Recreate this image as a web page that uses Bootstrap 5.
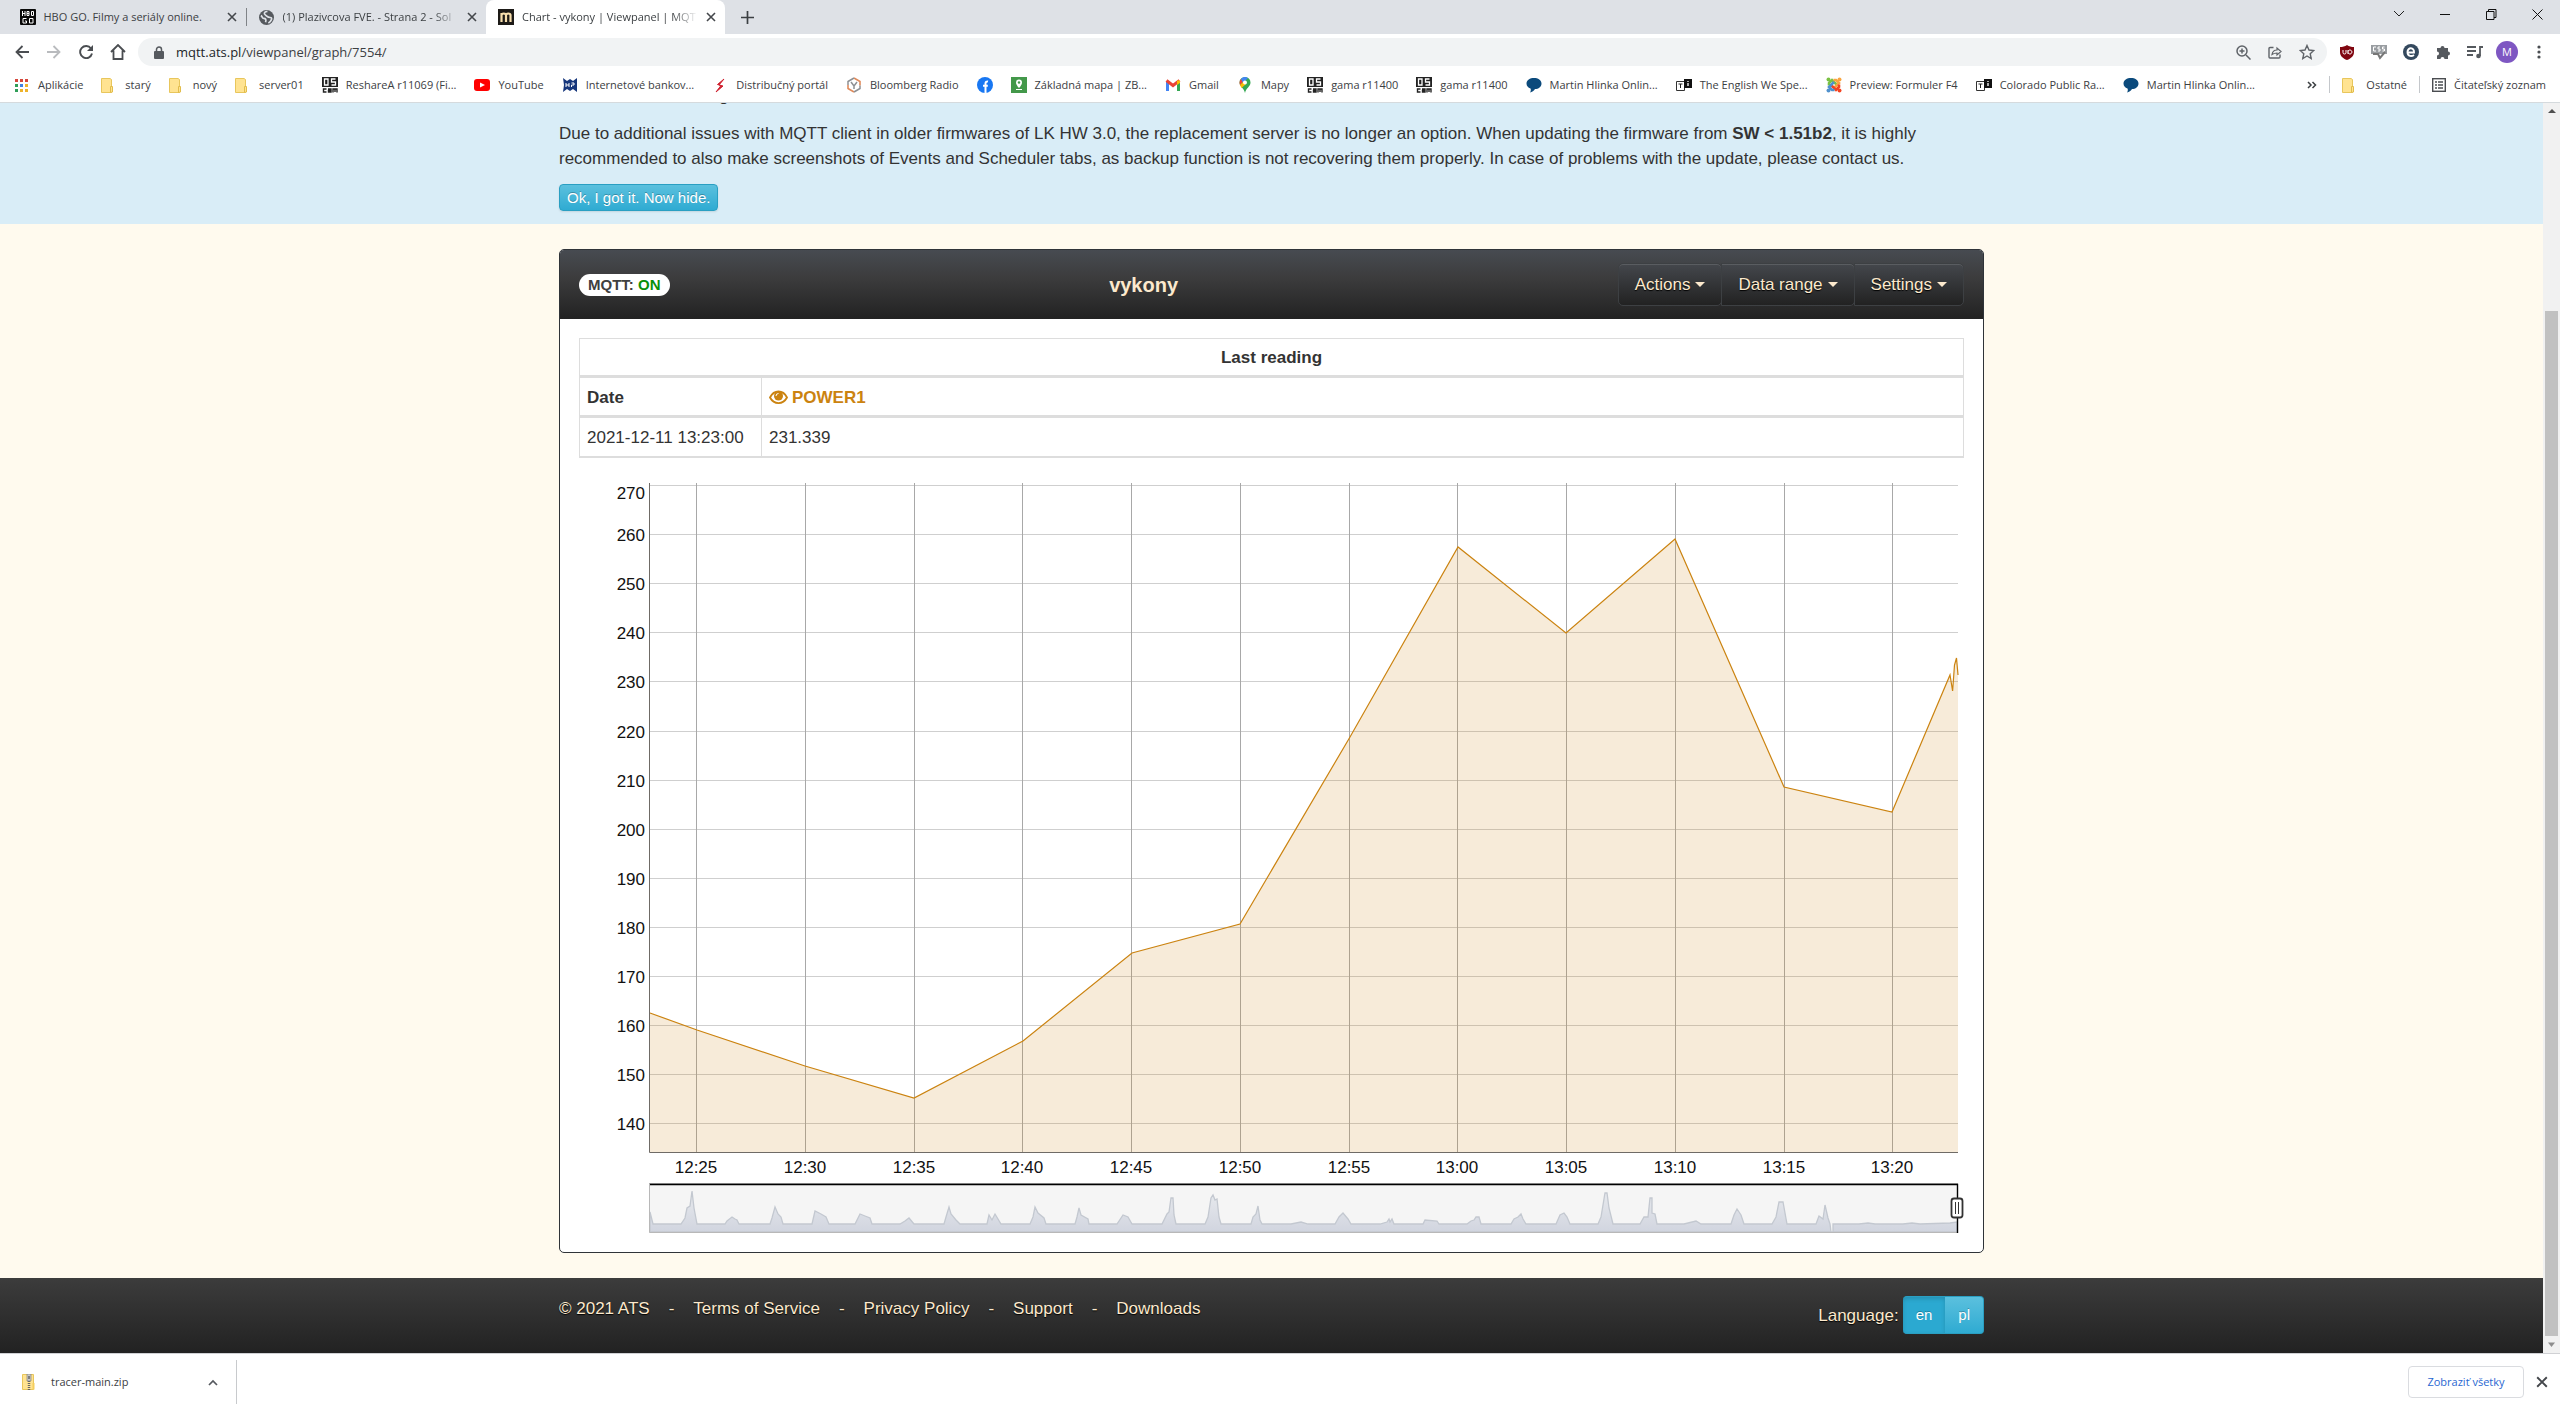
<!DOCTYPE html>
<html lang="sk">
<head>
<meta charset="utf-8">
<meta name="viewport" content="width=device-width, initial-scale=1">
<title>Chart - vykony | Viewpanel | MQTT</title>
<link href="https://cdn.jsdelivr.net/npm/bootstrap@5.3.0/dist/css/bootstrap.min.css" rel="stylesheet">
<style>
:root{--cream:#fce9cd}
body{font-family:"Liberation Sans",Arial,sans-serif;font-size:17px;line-height:25px;color:#333;background:#fff}
svg{display:block;flex:none}
.browser-ui{font-family:"Open Sans","Noto Sans",sans-serif;font-size:11px;line-height:16px;color:#3c4043}
.browser-ui button{border:0;background:none;padding:0;color:inherit;display:flex;align-items:center;justify-content:center}
.browser-ui a{color:inherit;text-decoration:none}
/* tabs */
.tabstrip{height:34px;background:#dee1e6}
.tab-item{width:239px;padding:0 9px 0 12px}
.tab-item.first{padding-left:20px;width:247px;border-right:1px solid #808387}
.tab-item.current{background:#fff;border-radius:8px 8px 0 0}
.tab-label{white-space:nowrap;overflow:hidden;width:176px}
.tab-label.faded{-webkit-mask-image:linear-gradient(90deg,#000 85%,transparent)}
.tab-rule{height:18px}
.win-btn{width:46px;height:28px}
/* toolbar */
.toolbar{height:36px;padding:0 5px 0 6px}
.tool-btn{width:32px;height:28px}
.omnibox{height:28px;border-radius:14px;background:#f1f3f4}
.address{font-size:13px}
.avatar{width:22px;height:22px;border-radius:50%;background:#7e57c2;color:#fff;font-size:11px}
/* bookmarks */
.bookmarks{height:33px;border-bottom:1px solid #d5dadd;padding:0 14px 3px 14px;gap:18px}
.bookmarks a{display:flex;align-items:center;gap:8px;white-space:nowrap}
.v-rule{width:1px;height:17px;background:#c4c7cb}
/* page */
.viewport{background:#fffaee}
.scroll-rail{width:17px;background:#f1f1f1}
.scroll-thumb{width:13px;background:#c1c1c1;margin-top:208px}
.wrap{max-width:1425px;width:90%;margin:0 auto}
.notice{background:#d9edf7;overflow:hidden;padding-bottom:13px}
.notice p{margin:0 0 13px}
.notice .cut-line{margin-top:-20px;padding-left:160px}
.btn-teal{--bs-btn-color:#fff;--bs-btn-hover-color:#fff;background:linear-gradient(#5bc0de,#2fabd2);border:1px solid #2a9fc2;font-size:15px;line-height:25px;text-shadow:0 -1px 0 rgba(0,0,0,.25);border-radius:4px;color:#fff}
.btn-hide{padding:0 7px;box-shadow:0 1px 2px rgba(0,0,0,.1)}
.panel{border:1px solid #2f3338;border-radius:5px;background:#fff;margin-top:25px;margin-bottom:25px;overflow:hidden}
.panel-top{height:69px;padding:0 19px;background:linear-gradient(#474b51,#3c3c3d 40%,#222)}
.state-pill{background:#fff;border-radius:11px;font-size:15px;line-height:22px;font-weight:700;padding:0 9px;color:#404040}
.state-pill span{color:#0a8f0a}
.panel-title{font-size:20px;font-weight:700;color:var(--cream);margin:0}
.btn-dark-grad{background:linear-gradient(#44474c,#222);border:1px solid #3d4043;color:var(--cream);font-size:17px;line-height:25px;padding:8px 16px;text-shadow:0 1px 1px #000;border-radius:5px;box-shadow:inset 0 1px 0 rgba(255,255,255,.12)}
.btn-dark-grad:hover,.btn-dark-grad:active{color:#fff}
.btn-dark-grad.dropdown-toggle::after{margin-left:5px;vertical-align:3px;border-top:5px solid;border-left:5px solid transparent;border-right:5px solid transparent}
.panel-body{padding:19px}
.readings{border:1px solid #ddd;border-bottom-width:2px;margin:0 0 16px;width:100%}
.readings th,.readings td{border:0;padding:6px 7px 5px;height:38px;color:#333}
.readings tr + tr > *{border-top:3px solid #ddd;height:40px}
.readings td + td,.readings th + th{border-left:1px solid #ddd}
.readings .date-col{width:182px}
.sensor{color:#cb8310;text-decoration:none}
.axis-text text{font-size:17px;fill:#111}
/* footer */
.page-foot{background:linear-gradient(#3c3c3c,#222);color:var(--cream);height:75px;text-shadow:0 1px 1px #000}
.page-foot a{color:inherit;text-decoration:none}
.foot-links{gap:19px;padding-top:18px}
.foot-lang{padding-top:18px}
.btn-lang{padding:6px 13px;line-height:24px;border-left:0}
.btn-lang.on{background:#2ba9d1;box-shadow:inset 0 2px 4px rgba(0,0,0,.15)}
/* downloads */
.shelf{height:57px;border-top:1px solid #d0d1d4}
.shelf-item{width:237px;height:44px;border-right:1px solid #c8cacd;padding:0 18px 0 22px}
.browser-ui .btn-all{border:1px solid #dadce0;border-radius:4px;height:32px;width:116px;color:#2a67d1}
</style>
<script src="https://cdn.jsdelivr.net/npm/bootstrap@5.3.0/dist/js/bootstrap.bundle.min.js"></script>
</head>
<body class="vh-100 d-flex flex-column overflow-hidden">

<svg width="0" height="0" class="position-absolute" aria-hidden="true">
  <symbol id="i-x" viewBox="0 0 10 10"><path d="M1 1l8 8M9 1L1 9" stroke="#44474b" stroke-width="1.6" fill="none"/></symbol>
  <symbol id="i-folder" viewBox="0 0 12 16"><path d="M.5 1.5h8.500l1.500 1V15.500H.500z" fill="#ffe391" stroke="#e8c65c"/><path d="M9.500 9.500h2v5.500l-2 .5z" fill="#ffe391" stroke="#e2bd4c"/></symbol>
  <symbol id="i-oscam" viewBox="0 0 16 16"><path d="M0 0h16v10H0z" fill="#222"/><path d="M2.500 2h3.500v6H2.500zM9.500 8h4V5h-4V2h4" fill="none" stroke="#fff" stroke-width="1.300"/><path d="M4.500 12H1.500v3h3M6 12h3v3H6.500v-1.500H9M11 15.500V12h4v3.500M13 12v3" fill="none" stroke="#222" stroke-width="1.400"/></symbol>
  <symbol id="i-bubble" viewBox="0 0 16 16"><path d="M8 1c4 0 7.500 2 7.500 5.500S12.500 12 9 12c-1 2-3 3-5 3.500C5 14 5 12.500 4.500 11.500 2 10.500.5 9 .5 6.500.5 3 4 1 8 1z" fill="#0b4a7c"/></symbol>
  <symbol id="i-ti" viewBox="0 0 16 16"><path d="M.5 4.500h8v9h-8z" fill="#fff" stroke="#333"/><path d="M8 2h8v9H8z" fill="#111"/><path d="M2.500 7h4M4.500 7v4" stroke="#222"/><path d="M12 4v1M12 6v3" stroke="#fff" stroke-width="1.300"/></symbol>
</svg>

<header class="browser-ui flex-shrink-0">
  <div class="tabstrip d-flex">
    <div class="d-flex align-items-center">
      <div class="tab-item first tab-rule d-flex align-items-center justify-content-between">
        <svg width="16" height="16" viewBox="0 0 16 16"><rect width="16" height="16" rx="1" fill="#0a0a0a"/><path d="M2.500 2v5M5 2v5M2.500 4.500H5M7 2.500h2v4H7zM7 4.500h2M11.500 2.500h2v4h-2zM6.500 9.500H3v4.500h3.500v-2H5M9.500 9.500h3.500V14H9.500z" stroke="#fff" fill="none"/></svg>
        <div class="tab-label">HBO GO. Filmy a seriály online.</div>
        <button aria-label="Zavrieť"><svg width="10" height="10"><use href="#i-x"/></svg></button>
      </div>
    </div>
    <div class="tab-item d-flex align-items-center justify-content-between">
      <svg width="15" height="15" viewBox="0 0 16 16"><circle cx="8" cy="8" r="8" fill="#55595e"/><path d="M9 1.500C5 2 5 4 7 5.500S9 8 12 8s1 4-2 6M2 6c2 1 1 3 3 3s3 1 2 4" stroke="#dee1e6" stroke-width="1.800" fill="none"/></svg>
      <div class="tab-label faded">(1) Plazivcova FVE. - Strana 2 - Sol</div>
      <button aria-label="Zavrieť"><svg width="10" height="10"><use href="#i-x"/></svg></button>
    </div>
    <div class="tab-item current d-flex align-items-center justify-content-between">
      <svg width="16" height="16" viewBox="0 0 16 16"><rect width="16" height="16" fill="#1d1a17"/><path d="M3.500 13V4M3.500 6c0-2 4.500-2 4.500 0v7M8 6c0-2 4.500-2 4.500 0v7" stroke="#f8dfae" stroke-width="2.200" fill="none"/></svg>
      <div class="tab-label faded">Chart - vykony | Viewpanel | MQT</div>
      <button aria-label="Zavrieť"><svg width="10" height="10"><use href="#i-x"/></svg></button>
    </div>
    <button class="ms-3" aria-label="Nová karta"><svg width="13" height="13" viewBox="0 0 13 13"><path d="M6.500 0v13M0 6.500h13" stroke="#3c4043" stroke-width="1.700"/></svg></button>
    <div class="ms-auto d-flex">
      <button class="win-btn" aria-label="Karty"><svg width="12" height="8" viewBox="0 0 12 8"><path d="M1 1l5 5 5-5" stroke="#222" fill="none"/></svg></button>
      <button class="win-btn" aria-label="Minimalizovať"><svg width="10" height="10"><path d="M0 5.500h10" stroke="#111"/></svg></button>
      <button class="win-btn" aria-label="Obnoviť"><svg width="11" height="11"><path d="M.5 2.500h7.500v8H.5zM2.500 2.500V.500H10V8.500H8" stroke="#111" fill="none"/></svg></button>
      <button class="win-btn" aria-label="Zavrieť okno"><svg width="11" height="11"><path d="M.5.500l10 10M10.500.500l-10 10" stroke="#111" fill="none"/></svg></button>
    </div>
  </div>

  <div class="toolbar d-flex align-items-center">
    <button class="tool-btn" aria-label="Späť"><svg width="14" height="14" viewBox="0 0 14 14"><path d="M14 7H1.500M7.500 1l-6 6 6 6" stroke="#4a4d51" stroke-width="1.800" fill="none"/></svg></button>
    <button class="tool-btn" aria-label="Dopredu"><svg width="14" height="14" viewBox="0 0 14 14"><path d="M0 7h12.500M6.500 1l6 6-6 6" stroke="#b9bbbe" stroke-width="1.800" fill="none"/></svg></button>
    <button class="tool-btn" aria-label="Obnoviť"><svg width="14" height="14" viewBox="0 0 14 14"><path d="M12 3.500A6 6 0 1 0 13 8.500" stroke="#4a4d51" stroke-width="1.900" fill="none"/><path d="M14 0v6H8z" fill="#4a4d51"/></svg></button>
    <button class="tool-btn" aria-label="Domov"><svg width="16" height="16" viewBox="0 0 16 16"><path d="M1 8l7-7 7 7M3.500 6.500V15h9V6.500" stroke="#4a4d51" stroke-width="1.800" fill="none"/></svg></button>
    <div class="omnibox flex-grow-1 d-flex align-items-center ms-1 ps-3 pe-1">
      <svg width="10" height="13" viewBox="0 0 10 13"><rect y="5" width="10" height="8" rx="1" fill="#55595e"/><path d="M2.500 5V3.500a2.500 2.500 0 0 1 5 0V5" stroke="#55595e" stroke-width="1.500" fill="none"/></svg>
      <a class="address flex-grow-1 ms-2 ps-1" href="#"><span class="text-dark">mqtt.ats.pl</span>/viewpanel/graph/7554/</a>
      <button class="tool-btn" aria-label="Lupa"><svg width="15" height="15" viewBox="0 0 15 15"><circle cx="6" cy="6" r="5" stroke="#5f6368" stroke-width="1.500" fill="none"/><path d="M10 10l4.500 4.500M3.500 6h5M6 3.500v5" stroke="#5f6368" stroke-width="1.500"/></svg></button>
      <button class="tool-btn" aria-label="Zdieľať"><svg width="14" height="14" viewBox="0 0 14 14"><path d="M5.500 2.500H2a1 1 0 0 0-1 1v8.500a1 1 0 0 0 1 1h9a1 1 0 0 0 1-1V9.500" stroke="#5f6368" stroke-width="1.400" fill="none"/><path d="M4 9.500C4.500 6.500 6 5 9 5V3l4 3.500L9 10V8C7 8 5.500 8.500 4 9.500z" stroke="#5f6368" stroke-width="1.200" fill="none"/></svg></button>
      <button class="tool-btn" aria-label="Záložka"><svg width="16" height="16" viewBox="0 0 16 16"><path d="M8 1.500l2 4.500 4.800.5-3.600 3.200 1 4.800L8 12l-4.200 2.500 1-4.800L1.200 6.500 6 6z" stroke="#5f6368" stroke-width="1.400" fill="none"/></svg></button>
    </div>
    <button class="tool-btn ms-1" aria-label="uBlock"><svg width="14" height="15" viewBox="0 0 14 15"><path d="M7 0c2 1.500 4.500 2 7 2v5c0 4-3 6.500-7 8-4-1.500-7-4-7-8V2c2.500 0 5-.5 7-2z" fill="#800610"/><path d="M3 5v2.500a1.500 1.500 0 0 0 3 0V5M8 5v4M8 6.500a2 2 0 1 1 0 1" stroke="#fff" fill="none"/></svg></button>
    <button class="tool-btn" aria-label="CSS"><svg width="16" height="16" viewBox="0 0 16 16"><path d="M0 1h16v9H0z" fill="#999da1"/><path d="M5 3H2.500v4H5M9 3H7v2h2v2H7M13.500 3h-2v2h2v2h-2" stroke="#fff" fill="none"/><path d="M2 10h5l2 4 5-6" stroke="#777" stroke-width="2" fill="none"/></svg></button>
    <button class="tool-btn" aria-label="Rozšírenie"><svg width="16" height="16" viewBox="0 0 16 16"><circle cx="8" cy="8" r="8" fill="#34495e"/><path d="M4.500 8.500H11C11.500 3 4.500 3 4.500 8S9 12.500 11 11" stroke="#fff" stroke-width="1.900" fill="none"/></svg></button>
    <button class="tool-btn" aria-label="Rozšírenia"><svg width="16" height="16" viewBox="0 0 16 16"><path d="M2 4h3.500a2 2 0 1 1 4 0H13v3.500a2 2 0 1 1 0 4V15H9.500a2 2 0 0 0-4 0H2v-3.500a2 2 0 0 0 0-4z" fill="#55595e"/></svg></button>
    <button class="tool-btn" aria-label="Médiá"><svg width="16" height="14" viewBox="0 0 16 14"><path d="M0 2h9M0 6h9M0 10h6M13 11V2h3" stroke="#55595e" stroke-width="1.800" fill="none"/><circle cx="11.500" cy="11" r="2.300" fill="#55595e"/></svg></button>
    <button class="tool-btn" aria-label="Profil"><span class="avatar d-flex align-items-center justify-content-center">M</span></button>
    <button class="tool-btn" aria-label="Ponuka"><svg width="4" height="14"><g fill="#4a4d51"><circle cx="2" cy="2" r="1.600"/><circle cx="2" cy="7" r="1.600"/><circle cx="2" cy="12" r="1.600"/></g></svg></button>
  </div>

  <nav class="bookmarks d-flex align-items-center" aria-label="Záložky">
    <a href="#"><svg width="16" height="16" viewBox="0 0 16 16"><path d="M1 2h3v3H1zM6 2h3v3H6zM11 2h3v3h-3z" fill="#d5473c"/><path d="M1 7h3v3H1z" fill="#2f9e58"/><path d="M6 7h3v3H6z" fill="#4182e4"/><path d="M11 7h3v3h-3zM6 12h3v3H6zM11 12h3v3h-3z" fill="#eeb32b"/><path d="M1 12h3v3H1z" fill="#2f9e58"/></svg>Aplikácie</a>
    <a href="#"><svg width="16" height="16"><use href="#i-folder" width="12"/></svg>starý</a>
    <a href="#"><svg width="16" height="16"><use href="#i-folder" width="12"/></svg>nový</a>
    <a href="#"><svg width="16" height="16"><use href="#i-folder" width="12"/></svg>server01</a>
    <a href="#"><svg width="16" height="16"><use href="#i-oscam"/></svg>ReshareA r11069 (Fi...</a>
    <a href="#"><svg width="16" height="16" viewBox="0 0 16 16"><rect y="2" width="16" height="12" rx="3" fill="#f00"/><path d="M6 5.500l5 2.500-5 2.500z" fill="#fff"/></svg>YouTube</a>
    <a href="#"><svg width="16" height="16" viewBox="0 0 16 16"><path d="M1 1l4 3 3-2 3 2 4-3v14l-4-3-3 2-3-2-4 3 1-7z" fill="#16367c"/><path d="M4 6v4M4 8h3M7 6v4M9.500 6h2.500v2H9.500V10" stroke="#fff" fill="none"/></svg>Internetové bankov...</a>
    <a href="#"><svg width="16" height="16" viewBox="0 0 16 16"><path d="M12 2L5.500 7.500 9 8.500 4 15l7-6-4-1z" fill="#cf1f2e" stroke="#cf1f2e"/></svg>Distribučný portál</a>
    <a href="#"><svg width="16" height="16" viewBox="0 0 16 16"><path d="M8 1l6 3.500v4M8 15l-6-3.500V8" stroke="#e08b5c" stroke-width="1.600" fill="none"/><path d="M2 8V4.500L8 1M14 8.500v3L8 15M5 5l3 4 3-4M8 9v3" stroke="#8d9094" stroke-width="1.500" fill="none"/></svg>Bloomberg Radio</a>
    <a href="#" aria-label="Facebook"><svg width="16" height="16" viewBox="0 0 16 16"><circle cx="8" cy="8" r="8" fill="#1877f2"/><path d="M8.500 16V6.500a2 2 0 0 1 2.500-2M6 8.800h4.800" stroke="#fff" stroke-width="2" fill="none"/></svg></a>
    <a href="#"><svg width="16" height="16" viewBox="0 0 16 16"><rect width="16" height="16" fill="#43984a"/><path d="M8 2.500a3 3 0 0 1 3 3C11 8 8 11 8 11S5 8 5 5.500a3 3 0 0 1 3-3z" fill="#fff"/><circle cx="8" cy="5.500" r="1.200" fill="#43984a"/><path d="M5 12.500h6" stroke="#fff"/></svg>Základná mapa | ZB...</a>
    <a href="#"><svg width="16" height="16" viewBox="0 0 16 16"><path d="M2.500 14V4" stroke="#4285f4" stroke-width="3"/><path d="M13.500 14V4" stroke="#34a853" stroke-width="3"/><path d="M1.500 3.500L8 8.500l6.500-5" stroke="#ea4335" stroke-width="3" fill="none"/><path d="M12 3.500h3V6l-3 2z" fill="#fbbc04"/></svg>Gmail</a>
    <a href="#"><svg width="16" height="16" viewBox="0 0 16 16"><path d="M8 0a5.500 5.500 0 0 1 5.500 5.500C13.500 9.500 9 11 8 16 7 11 2.500 9.500 2.500 5.500A5.500 5.500 0 0 1 8 0z" fill="#34a853"/><path d="M3 8L8 3 4 2C2 4 2.500 6.500 3 8z" fill="#ea4335"/><path d="M4 2a5.500 5.500 0 0 1 7-1L6 6z" fill="#4285f4"/><path d="M3 8l4-4 2 3-4.500 4z" fill="#fbbc04"/><circle cx="8" cy="5.500" r="2" fill="#fff"/></svg>Mapy</a>
    <a href="#"><svg width="16" height="16"><use href="#i-oscam"/></svg>gama r11400</a>
    <a href="#"><svg width="16" height="16"><use href="#i-oscam"/></svg>gama r11400</a>
    <a href="#"><svg width="16" height="16"><use href="#i-bubble"/></svg>Martin Hlinka Onlin...</a>
    <a href="#"><svg width="16" height="16"><use href="#i-ti"/></svg>The English We Spe...</a>
    <a href="#"><svg width="16" height="16" viewBox="0 0 16 16"><g fill="none" stroke-width="2.600"><path d="M3 8.500V6l3-3 4.500 4.500" stroke="#7ac143"/><path d="M7.500 3H10l3 3-5 5" stroke="#f9a541"/><path d="M13 7.500V10l-3 3-5-5" stroke="#f44321"/><path d="M8.500 13H6l-3-3 5-5" stroke="#5091cd"/></g><circle cx="2.500" cy="2.500" r="2" fill="#7ac143"/><circle cx="13.500" cy="2.500" r="2" fill="#f9a541"/><circle cx="13.500" cy="13.500" r="2" fill="#f44321"/><circle cx="2.500" cy="13.500" r="2" fill="#5091cd"/></svg>Preview: Formuler F4</a>
    <a href="#"><svg width="16" height="16"><use href="#i-ti"/></svg>Colorado Public Ra...</a>
    <a href="#"><svg width="16" height="16"><use href="#i-bubble"/></svg>Martin Hlinka Onlin...</a>
    <div class="ms-auto d-flex align-items-center gap-2">
      <button aria-label="Ďalšie"><svg width="10" height="8" viewBox="0 0 10 8"><path d="M1 1l3 3-3 3M5.500 1l3 3-3 3" stroke="#3c4043" stroke-width="1.500" fill="none"/></svg></button>
      <div class="v-rule ms-1"></div>
      <a href="#" class="ms-1"><svg width="16" height="16"><use href="#i-folder" width="12"/></svg>Ostatné</a>
      <div class="v-rule ms-1"></div>
      <a href="#" class="ms-1"><svg width="14" height="14" viewBox="0 0 14 14"><rect x=".7" y=".7" width="12.600" height="12.600" stroke="#4a4d51" stroke-width="1.400" fill="none"/><path d="M3 4h2M6 4h5M3 7h2M6 7h5M3 10h2M6 10h5" stroke="#4a4d51" stroke-width="1.400"/></svg>Čitateľský zoznam</a>
    </div>
  </nav>
</header>

<div class="flex-grow-1 d-flex overflow-hidden">
  <div class="viewport flex-grow-1 d-flex flex-column">
    <section class="notice flex-shrink-0">
      <div class="wrap">
        <p class="cut-line">g</p>
        <p>Due to additional issues with MQTT client in older firmwares of LK HW 3.0, the replacement server is no longer an option. When updating the firmware from <b>SW &lt; 1.51b2</b>, it is highly recommended to also make screenshots of Events and Scheduler tabs, as backup function is not recovering them properly. In case of problems with the update, please contact us.</p>
        <button class="btn btn-teal btn-hide d-block">Ok, I got it. Now hide.</button>
      </div>
    </section>

    <main class="wrap">
      <div class="panel">
        <div class="panel-top d-flex align-items-center">
          <div class="state-pill">MQTT: <span>ON</span></div>
          <h1 class="panel-title flex-grow-1 text-center">vykony</h1>
          <div class="btn-group">
            <button class="btn btn-dark-grad dropdown-toggle">Actions</button>
            <button class="btn btn-dark-grad dropdown-toggle">Data range</button>
            <button class="btn btn-dark-grad dropdown-toggle">Settings</button>
          </div>
        </div>
        <div class="panel-body">
          <table class="readings">
            <tr><th colspan="2" class="text-center">Last reading</th></tr>
            <tr><th class="date-col">Date</th><th><a class="sensor d-flex align-items-center" href="#"><svg class="me-1" width="19" height="15" viewBox="0 0 19 15"><path d="M1 7.500C5-.5 14-.5 18 7.500 14 15 5 15 1 7.500z" stroke="#cb8310" stroke-width="1.800" fill="none"/><circle cx="9.500" cy="6" r="4.500" fill="#cb8310"/><path d="M7 6a2.500 2.500 0 0 1 2.500-2.500" stroke="#fff" fill="none"/></svg>POWER1</a></th></tr>
            <tr><td>2021-12-11 13:23:00</td><td>231.339</td></tr>
          </table>

          <svg class="w-100 axis-text" viewBox="579 474 1385 759" role="img" aria-label="POWER1">
            <g id="grid"></g>
            <path d="M650 1013L697 1030 805 1066 914 1098 1023 1041 1132 953 1240 924 1350 737 1458 547 1566 633 1675 539 1784 787 1892 812 1950 675 1952.600 691 1954.500 665 1956.500 658 1958 675V1152H650z" fill="#cb8310" fill-opacity=".16"/>
            <path d="M650 1013L697 1030 805 1066 914 1098 1023 1041 1132 953 1240 924 1350 737 1458 547 1566 633 1675 539 1784 787 1892 812 1950 675 1952.600 691 1954.500 665 1956.500 658 1958 675" fill="none" stroke="#cb8310" stroke-width="1.200"/>
            <path d="M649.500 483V1152.500H1958" fill="none" stroke="#6f6b66"/>
            <!-- range selector -->
            <defs><linearGradient id="rs" x1="0" y1="0" x2="0" y2="1"><stop offset="0" stop-color="#e8eaee"/><stop offset="1" stop-color="#d1d5df"/></linearGradient></defs>
            <rect x="650" y="1184" width="1308" height="48" fill="#f5f5f5"/>
            <path id="mini" fill="url(#rs)" stroke="#c3c8d0" stroke-width="1.300"/>
            <path d="M649.500 1183V1232.500H1957" fill="none" stroke="#b8b8b8"/>
            <path d="M649 1183.500H1958" stroke="#aaa"/>
            <path d="M650 1184.500H1957.500V1233" fill="none" stroke="#000" stroke-width="1.400"/>
            <rect x="1951.500" y="1198.500" width="11" height="19" rx="2.500" fill="#fff" stroke="#333" stroke-width="1.800"/>
            <path d="M1955.500 1202v12M1958.500 1202v12" stroke="#333"/>
          </svg>
        </div>
      </div>
    </main>

    <footer class="page-foot mt-auto flex-shrink-0">
      <div class="wrap d-flex justify-content-between">
        <div class="foot-links d-flex"><span>© 2021 ATS</span><span>-</span><a href="#">Terms of Service</a><span>-</span><a href="#">Privacy Policy</a><span>-</span><a href="#">Support</a><span>-</span><a href="#">Downloads</a></div>
        <div class="foot-lang d-flex align-items-center gap-1"><span>Language:</span>
          <div class="btn-group"><button class="btn btn-teal btn-lang on">en</button><button class="btn btn-teal btn-lang">pl</button></div>
        </div>
      </div>
    </footer>
  </div>
  <div class="scroll-rail d-flex flex-column align-items-center flex-shrink-0 position-relative">
    <svg class="position-absolute top-0 mt-1" width="8" height="8" viewBox="0 0 8 8"><path d="M0 6l4-4 4 4z" fill="#505050"/></svg>
    <div class="scroll-thumb flex-grow-1"></div>
    <svg width="17" height="17" viewBox="0 0 17 17"><path d="M5 6.500h7L8.500 11z" fill="#8d8d8d"/></svg>
  </div>
</div>

<div class="shelf browser-ui d-flex align-items-center justify-content-between flex-shrink-0">
  <div class="shelf-item d-flex align-items-center justify-content-between">
    <div class="d-flex align-items-center"><svg width="13" height="16" viewBox="0 0 13 16"><path d="M.5.500h11v15H.500z" fill="#ffe391" stroke="#e8c65c"/><path d="M10.500 9h2v6.500h-2z" fill="#f5ce5d"/><path d="M5 0h4v7H5z" fill="#c9c9c9" stroke="#777" stroke-width=".6"/><path d="M7 7v9" stroke="#666" stroke-width="2.500" stroke-dasharray="1 1"/><path d="M7 2v3" stroke="#333"/></svg><a href="#" class="ms-3 fs-6x">tracer-main.zip</a></div>
    <button aria-label="Ponuka súboru"><svg width="10" height="7" viewBox="0 0 10 7"><path d="M1 6l4-4 4 4" stroke="#55595e" stroke-width="1.700" fill="none"/></svg></button>
  </div>
  <div class="d-flex align-items-center gap-2 pe-2">
    <button class="btn-all">Zobraziť všetky</button>
    <button class="mx-1" aria-label="Zavrieť lištu"><svg width="12" height="12"><use href="#i-x"/></svg></button>
  </div>
</div>

<script>
// Axis grid: value lines every 10 units, time lines every 5 minutes.
(function () {
  var out = '';
  for (var i = 0; i < 14; i++) {
    var y = Math.round(485 + i * 49.1);
    out += '<path d="M650 ' + (y + .5) + 'H1958" stroke="#cfcfcf"/>';
    out += '<text x="645" y="' + (i ? y + 7 : y + 14) + '" text-anchor="end">' + (270 - i * 10) + '</text>';
  }
  var times = ['12:25','12:30','12:35','12:40','12:45','12:50','12:55','13:00','13:05','13:10','13:15','13:20'];
  times.forEach(function (t, i) {
    var x = Math.round(696 + i * 108.75);
    out += '<path d="M' + (x + .5) + ' 483V1152" stroke="#a8a8a8"/>';
    out += '<text x="' + x + '" y="1173" text-anchor="middle">' + t + '</text>';
  });
  document.getElementById('grid').innerHTML = out;

  // Overview series in chart coordinates; values rest on 1224 between the peaks.
  var pts = '650 1212 653 1224 681 1224 685 1218 687 1208 690 1206 692 1191 694 1208 697 1224 725 1224 727 1221 732 1217 735 1219 737 1220 739 1224 770 1224 772 1218 775 1207 778 1214 781 1217 783 1224 812 1224 815 1211 821 1214 826 1217 829 1224 855 1224 860 1214 865 1216 870 1218 872 1224 900 1224 905 1221 909 1218 914 1224 944 1224 946 1217 949 1207 951 1214 956 1220 960 1224 987 1224 989 1215 992 1220 995 1214 1001 1224 1030 1224 1033 1217 1035 1207 1038 1213 1044 1218 1046 1224 1075 1224 1077 1217 1079 1208 1081 1215 1088 1219 1089 1224 1117 1224 1123 1215 1128 1217 1132 1224 1162 1224 1167 1214 1169 1212 1171 1198 1173 1198 1174 1215 1176 1224 1205 1224 1208 1217 1211 1198 1213 1195 1215 1200 1217 1199 1219 1217 1221 1224 1251 1224 1253 1217 1256 1214 1258 1206 1260 1220 1262 1224 1291 1224 1301 1222 1308 1224 1335 1224 1339 1217 1343 1213 1348 1219 1351 1224 1380 1224 1387 1222 1389 1219 1390 1222 1392 1219 1394 1224 1423 1224 1425 1220 1437 1221 1439 1224 1467 1224 1471 1221 1474 1220 1476 1217 1479 1217 1481 1224 1511 1224 1514 1219 1518 1217 1521 1214 1523 1219 1526 1224 1556 1224 1560 1215 1564 1213 1567 1217 1570 1224 1598 1224 1601 1217 1605 1193 1607 1193 1609 1208 1613 1224 1640 1224 1644 1217 1648 1217 1650 1198 1652 1198 1652 1213 1655 1214 1657 1224 1684 1224 1696 1221 1701 1224 1731 1224 1734 1215 1737 1209 1741 1215 1744 1224 1772 1224 1776 1217 1779 1202 1783 1202 1787 1224 1816 1224 1819 1216 1823 1219 1825 1205 1828 1218 1830 1224 1831 1232 1833 1232 1833 1224 1859 1224 1868 1223 1875 1224 1903 1224 1912 1223 1920 1224 1950 1223 1957 1222';
  document.getElementById('mini').setAttribute('d', 'M650 1232L' + pts + 'V1232z');
})();
</script>
</body>
</html>
